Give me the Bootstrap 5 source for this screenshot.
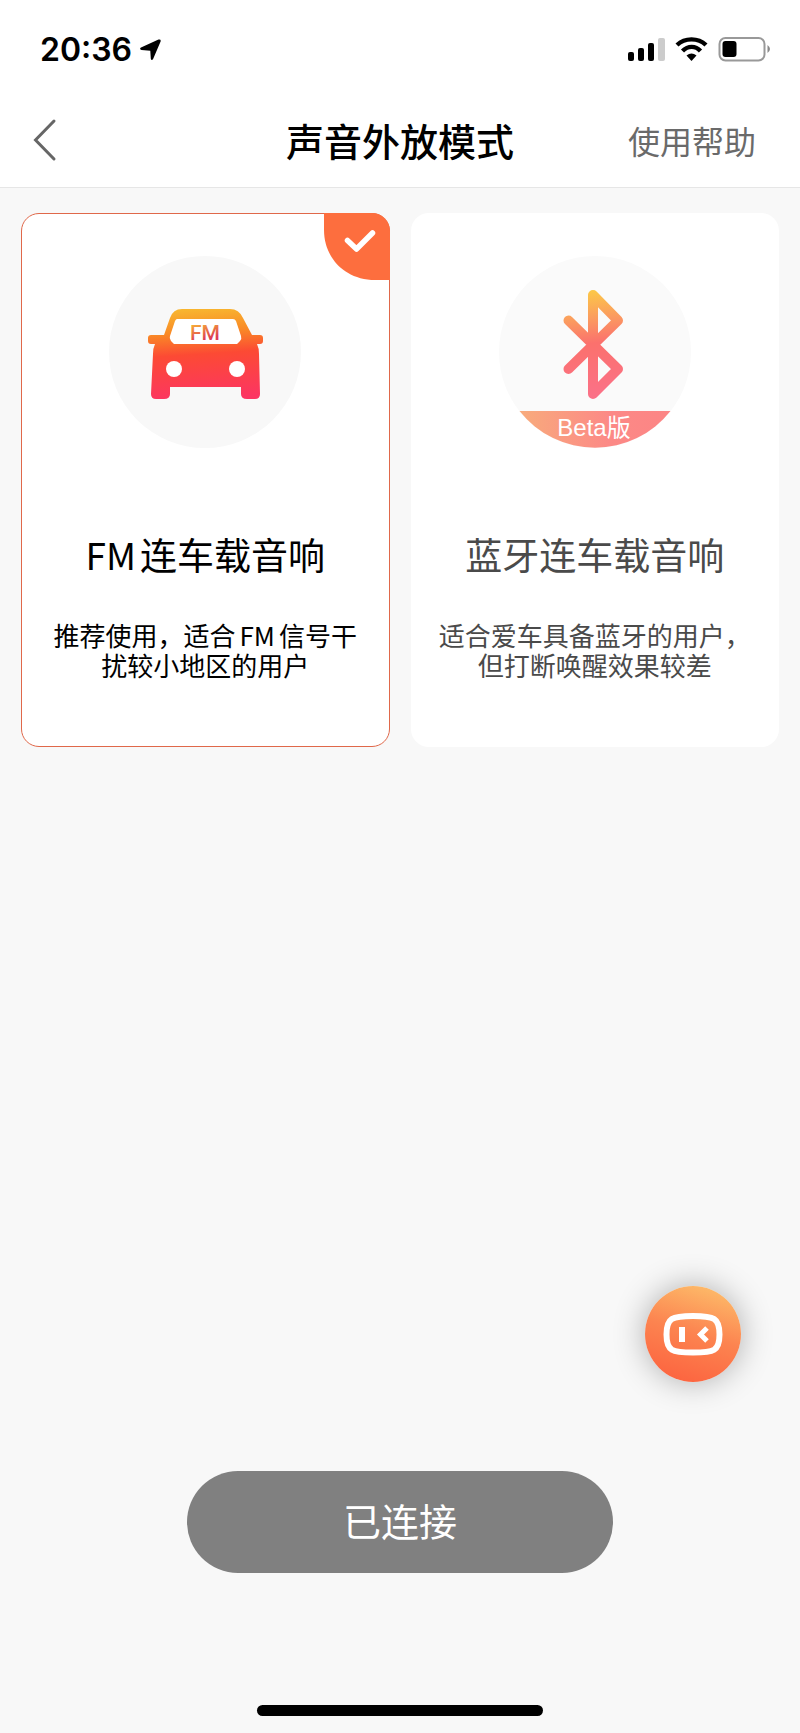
<!DOCTYPE html>
<html lang="zh-CN">
<head>
<meta charset="utf-8">
<meta name="viewport" content="width=device-width, initial-scale=1">
<title>声音外放模式</title>
<link href="https://cdn.jsdelivr.net/npm/bootstrap@5.3.0/dist/css/bootstrap.min.css" rel="stylesheet">
<style>
  body { font-family: "Noto Sans CJK SC", sans-serif; background: #f8f8f8; color: #000; }
  svg { display: block; flex: none; }
  .status-bar { height: 98px; padding: 2px 30px 0 40px; }
  .clock { font: 600 32px/40px Inter, sans-serif; }
  .title-bar { height: 90px; padding: 0 32px 6px; border-bottom: 1px solid #e6e6e6; }
  .page-title { font-size: 38px; line-height: 48px; font-weight: 500; }
  .help-link { font-size: 32px; line-height: 48px; color: #6a6a6a; padding-right: 12px; }
  .back-link { padding-top: 6px; }
  .side { flex: 1 1 0; }
  .modes { gap: 21px; padding: 25px 21px 0; }
  .mode { flex: 1 1 0; height: 534px; padding: 42px 25px 0; border: 1px solid transparent; border-radius: 18px; background: #fff; color: #4a4a4a; cursor: pointer; }
  .btn-check:checked + .mode { border-color: #e0684a; color: #000; }
  .corner { display: none; top: -1px; right: -1px; }
  .btn-check:checked + .mode .corner { display: block; }
  .btn-check:focus-visible + .mode { outline: 3px solid #ff6e40; }
  .mode-name { font-size: 37px; line-height: 48px; font-weight: 400; margin-top: 82px; }
  .mode-note { font-size: 26px; line-height: 30px; margin-top: 42px; }
  .latin { margin: 0 4px; }
  .mode-name .latin { margin-left: 0; }
  .beta-text { font-family: "Liberation Sans", "Noto Sans CJK SC", sans-serif; font-size: 24px; }
  .fm-text { font-family: Roboto, sans-serif; font-size: 21px; font-weight: 500; }
  .helper { width: 96px; height: 96px; margin: 0 59px 89px; box-shadow: 0 0 32px rgba(0,0,0,.3); }
  .connect { width: 53.25%; height: 102px; padding: 0 0 6px; font-size: 38px; background: #808080; color: #fff; margin-bottom: 132px; }
  .connect:hover { background: #737373; color: #fff; }
  .home-bar { width: 286px; height: 11px; background: #000; margin-bottom: 17px; }
</style>
</head>
<body>
<div class="d-flex flex-column min-vh-100">
  <header class="bg-white">
    <div class="status-bar d-flex align-items-center justify-content-between">
      <div class="d-flex align-items-center gap-2">
        <span class="clock">20:36</span>
        <svg width="22" height="22" viewBox="0 0 22 22" aria-hidden="true"><path d="M1 8.600 18.500.6Q21.200 0 20.600 2.400L13 20.200Q11.500 22 10.800 19.800L10.300 11.700 1.500 11Q-1 10 1 8.600Z"/></svg>
      </div>
      <svg width="142" height="26" viewBox="0 0 142 26" role="img" aria-label="信号、无线网络、电池">
        <rect x="0" y="15" width="6" height="9" rx="2"/><rect x="10" y="11" width="6" height="13" rx="2"/><rect x="20" y="6" width="6" height="18" rx="2"/><rect x="30" y="1" width="7" height="23" rx="2" fill="#ccc"/>
        <g fill="none" stroke="#000" stroke-width="4.400"><path d="M49 8C57 .5 70 .5 78 8"/><path d="M54.500 14C60 8.500 67.500 8.500 72.500 14"/></g>
        <path d="M58.500 18.500q5-4 10 0l-5 5.500Z"/>
        <rect x="91.500" y="1" width="45" height="22.500" rx="6" fill="none" stroke="#999" stroke-width="2"/><rect x="94.500" y="4" width="14" height="16" rx="3"/><path d="M139.500 8q5 4 0 8Z" fill="#888"/>
      </svg>
    </div>
    <nav class="title-bar d-flex align-items-center">
      <div class="side">
        <a href="#" class="back-link d-inline-block" aria-label="返回"><svg width="26" height="44" viewBox="0 0 26 44" fill="none" stroke="#666" stroke-width="3" stroke-linecap="round"><path d="M22 3 3.500 22 22 41"/></svg></a>
      </div>
      <h1 class="page-title m-0">声音外放模式</h1>
      <div class="side text-end"><a href="#" class="help-link text-decoration-none">使用帮助</a></div>
    </nav>
  </header>

  <main class="flex-grow-1 d-flex flex-column">
    <div class="modes d-flex" role="radiogroup" aria-label="声音外放模式">
      <input class="btn-check" type="radio" name="mode" id="mode-fm" checked>
      <label class="mode position-relative text-center" for="mode-fm">
        <svg class="corner position-absolute" width="67" height="67" viewBox="0 0 67 67" aria-hidden="true"><path d="M1 0H49A18 18 0 0 1 67 18V67H52C22 67 1 45 1 17Z" fill="#fd6e3e"/><path d="m24.500 27.500 9 8.500 16-16" fill="none" stroke="#fff" stroke-width="5.500" stroke-linecap="round" stroke-linejoin="round"/></svg>
        <svg class="mx-auto" width="192" height="192" viewBox="0 0 192 192" aria-hidden="true">
          <defs>
            <linearGradient id="car" gradientUnits="userSpaceOnUse" x1="90" y1="53" x2="96" y2="143"><stop offset="0" stop-color="#f8b52f"/><stop offset=".25" stop-color="#f98a26"/><stop offset=".5" stop-color="#fc4a34"/><stop offset="1" stop-color="#fc3562"/></linearGradient>
            <linearGradient id="fm" x1="0" y1="0" x2=".3" y2="1"><stop offset=".15" stop-color="#f7ae35"/><stop offset=".85" stop-color="#dd3b55"/></linearGradient>
          </defs>
          <circle cx="96" cy="96" r="96" fill="#f8f8f8"/>
          <path fill="url(#car)" d="M73 53H121Q130 53 134 62L143 79H151Q154 79 154 82V85Q154 88 151 88H148Q150 92 150 98L151 138Q151 143 146 143H138Q132 143 132 138V131H61V138Q61 143 55 143H47Q42 143 42 138L44 98Q44 92 46 88H42Q39 88 39 85V82Q39 79 42 79H55L61 62Q64 53 73 53Z"/>
          <path fill="#fff" d="M68 63H124Q126 63 127 65L132 80Q133 83 131 85L128 88H65L62 85Q60 82 61 80L66 65Q67 63 68 63Z"/>
          <circle cx="65" cy="113" r="8" fill="#fff"/><circle cx="128" cy="113" r="8" fill="#fff"/>
          <text class="fm-text" x="96" y="84" text-anchor="middle" fill="url(#fm)">FM</text>
        </svg>
        <h2 class="mode-name mb-0"><span class="latin">FM</span>连车载音响</h2>
        <p class="mode-note mb-0">推荐使用，适合<span class="latin">FM</span>信号干扰较小地区的用户</p>
      </label>
      <input class="btn-check" type="radio" name="mode" id="mode-bt">
      <label class="mode position-relative text-center" for="mode-bt">
        <svg class="corner position-absolute" width="67" height="67" viewBox="0 0 67 67" aria-hidden="true"><path d="M1 0H49A18 18 0 0 1 67 18V67H52C22 67 1 45 1 17Z" fill="#fd6e3e"/><path d="m24.500 27.500 9 8.500 16-16" fill="none" stroke="#fff" stroke-width="5.500" stroke-linecap="round" stroke-linejoin="round"/></svg>
        <svg class="mx-auto" width="192" height="192" viewBox="0 0 192 192">
          <defs>
            <linearGradient id="bt" gradientUnits="userSpaceOnUse" x1="80" y1="34" x2="92" y2="142"><stop offset="0" stop-color="#fccb45"/><stop offset=".28" stop-color="#fb9a60"/><stop offset=".5" stop-color="#fb716d"/><stop offset="1" stop-color="#fb7188"/></linearGradient>
            <linearGradient id="band"><stop offset="0" stop-color="#f8ab7c"/><stop offset=".6" stop-color="#fc8986"/><stop offset="1" stop-color="#fc8585"/></linearGradient>
          </defs>
          <circle cx="96" cy="96" r="96" fill="#fafafa"/>
          <path d="M20.500 155H171.500A96 96 0 0 1 20.500 155Z" fill="url(#band)"/>
          <path d="M69.500 64.500 119 113 94 138V39L119 64.500 69.500 113" fill="none" stroke="url(#bt)" stroke-width="10" stroke-linecap="round" stroke-linejoin="round"/>
          <text class="beta-text" x="95" y="180" text-anchor="middle" fill="#fff">Beta版</text>
        </svg>
        <h2 class="mode-name mb-0">蓝牙连车载音响</h2>
        <p class="mode-note mb-0">适合爱车具备蓝牙的用户，但打断唤醒效果较差</p>
      </label>
    </div>
    <button type="button" class="helper btn p-0 border-0 rounded-circle align-self-end mt-auto" aria-label="语音助手">
      <svg width="96" height="96" viewBox="0 0 96 96">
        <defs><linearGradient id="bot" x1=".7" y1="0" x2=".4" y2="1"><stop offset="0" stop-color="#fdbb69"/><stop offset=".5" stop-color="#fc8450"/><stop offset="1" stop-color="#fc6540"/></linearGradient></defs>
        <circle cx="48" cy="48" r="48" fill="url(#bot)"/>
        <path d="M48 30C69 30 74.500 32 74.500 48.500S69 66.500 48 66.500 21.500 65 21.500 48.500 27 30 48 30Z" fill="none" stroke="#fff" stroke-width="6"/>
        <path d="M34 41h6v15h-6Z" fill="#fff"/><path d="m62 42-6.500 6.500 6.500 6.500" fill="none" stroke="#fff" stroke-width="5"/>
      </svg>
    </button>
    <button type="button" class="connect btn border-0 rounded-pill align-self-center">已连接</button>
    <div class="home-bar rounded-pill align-self-center"></div>
  </main>
</div>
<script src="https://cdn.jsdelivr.net/npm/bootstrap@5.3.0/dist/js/bootstrap.bundle.min.js"></script>
</body>
</html>
